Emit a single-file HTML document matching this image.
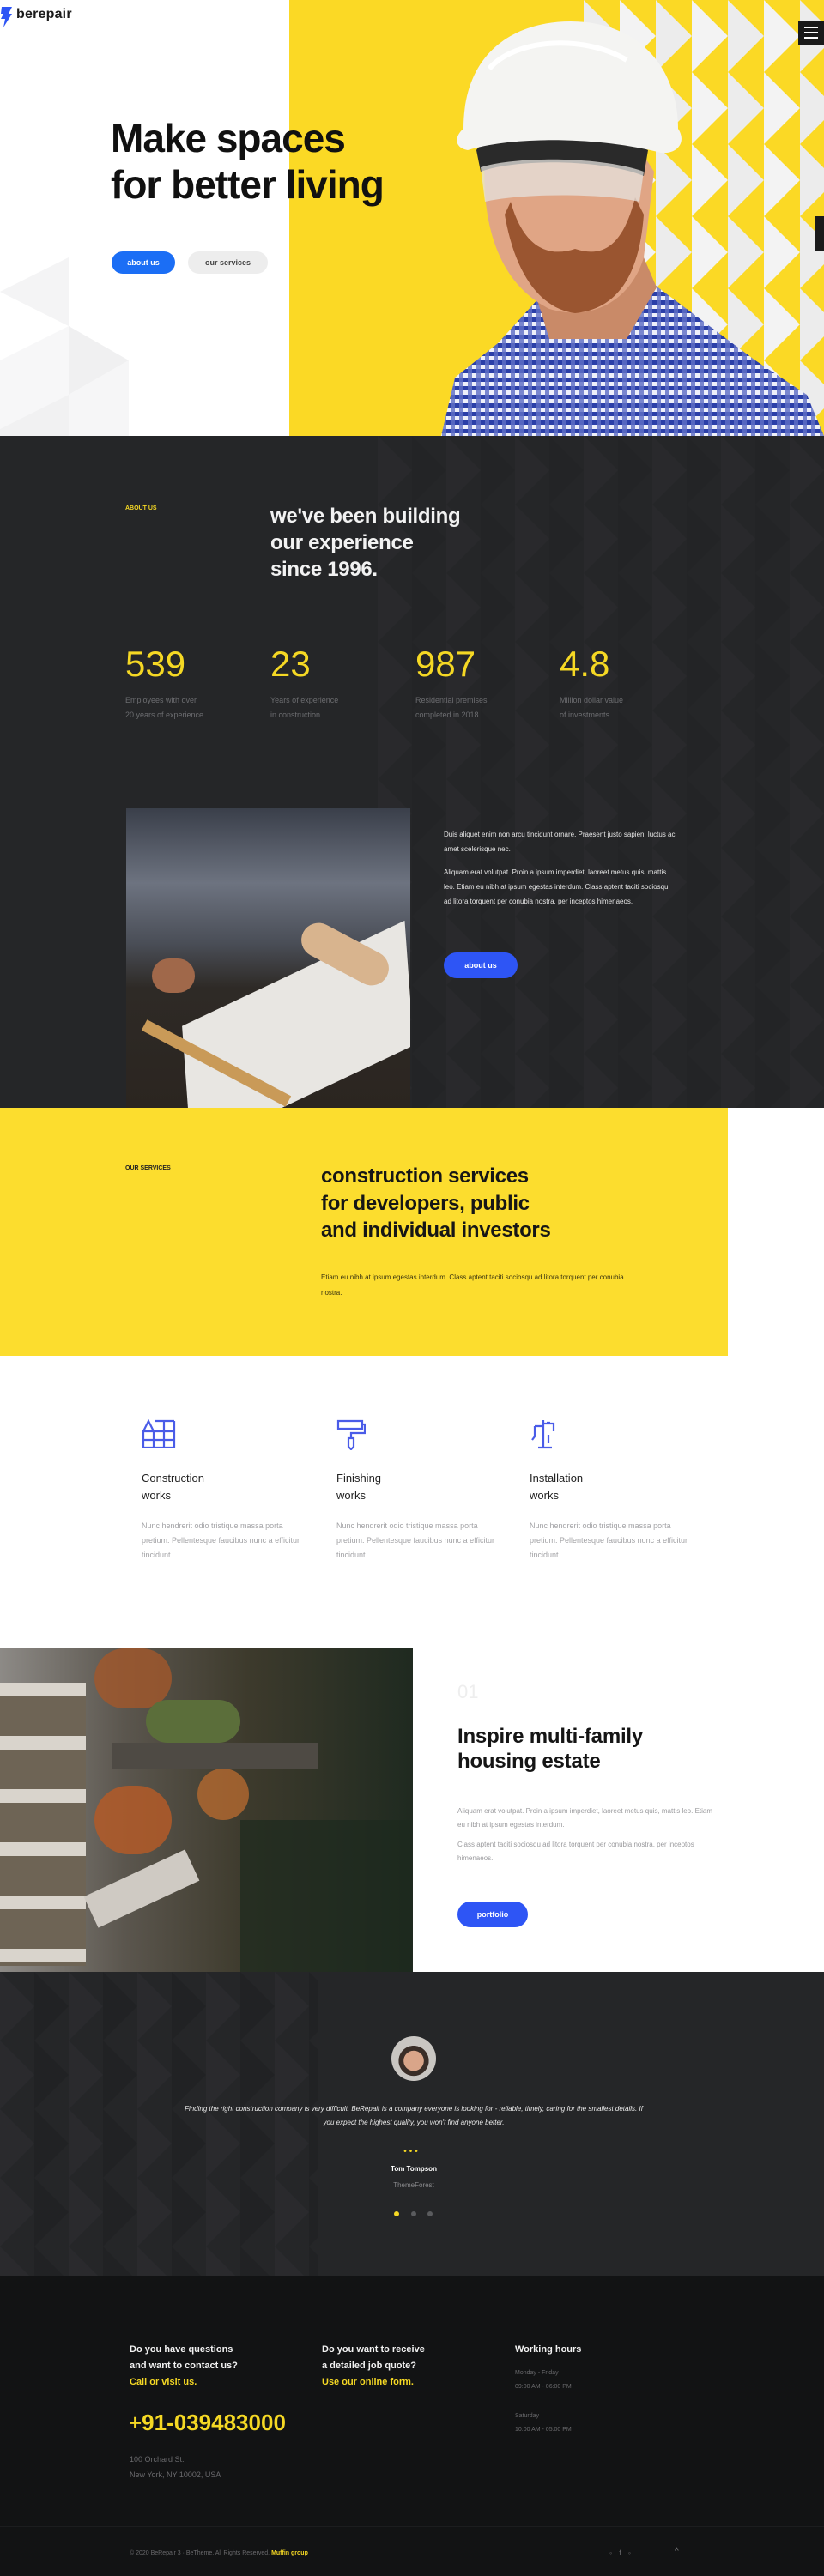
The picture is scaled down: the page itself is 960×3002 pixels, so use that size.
<!DOCTYPE html>
<html><head><meta charset="utf-8"><style>
*{margin:0;padding:0;box-sizing:border-box}
body{width:960px;height:3002px;position:relative;font-family:"Liberation Sans",sans-serif;background:#fff;overflow:hidden}
.a{position:absolute}
.btn{position:absolute;border-radius:16px;font-size:9px;font-weight:bold;color:#fff;background:#2e55f5;text-align:center}
.g{color:#8a8b8e;font-size:9px;line-height:17px}
</style></head><body>

<!-- HERO -->
<div class="a" style="left:0;top:0;width:960px;height:508px;background:#fff;overflow:hidden">
  <svg class="a" style="left:0;top:0" width="340" height="508">
    <polygon points="0,340 80,300 80,380" fill="#f4f4f5"/>
    <polygon points="0,420 80,380 80,460 0,500" fill="#f7f7f8"/>
    <polygon points="80,380 150,420 80,460" fill="#f0f0f1"/>
    <polygon points="80,460 150,420 150,508 80,508" fill="#f6f6f7"/>
    <polygon points="0,500 80,460 80,508 0,508" fill="#f1f1f2"/>
  </svg>
  <div class="a" style="left:337px;top:0;width:623px;height:508px;background:#fbd925"></div>
  <svg class="a" style="left:680px;top:0" width="280" height="508">
    <defs><pattern id="tri" width="84" height="84" patternUnits="userSpaceOnUse">
      <rect width="84" height="84" fill="#fbd925"/>
      <polygon points="0,0 42,42 0,84" fill="#ececec"/>
      <polygon points="42,0 84,42 42,84" fill="#f3f3f3"/>
    </pattern></defs>
    <rect width="280" height="508" fill="url(#tri)"/>
  </svg>
  <!-- man -->
  <svg class="a" style="left:500px;top:0" width="460" height="508">
    <defs><pattern id="chk" width="10" height="10" patternUnits="userSpaceOnUse">
      <rect width="10" height="10" fill="#eef0fa"/><rect width="5" height="5" fill="#2b3fa8"/><rect x="5" y="5" width="5" height="5" fill="#7a87cf"/><rect x="5" width="5" height="5" fill="#5566c0"/>
    </pattern></defs>
    <path d="M14,508 L30,440 L80,400 L130,345 L260,330 L300,360 L380,420 L440,460 L460,508 Z" fill="url(#chk)"/>
    <path d="M120,330 L140,395 L230,395 L265,335 L250,300 L130,300 Z" fill="#c98a68"/>
    <path d="M65,180 C60,260 80,330 140,360 C190,375 235,350 250,300 L262,200 L230,150 L90,150 Z" fill="#e0a585"/>
    <path d="M88,250 C100,320 130,360 170,365 C220,360 245,320 250,250 L240,230 C225,290 200,300 170,290 C140,300 110,290 95,235 Z" fill="#9a5530"/>
    <path d="M55,175 C70,150 200,145 255,175 L250,205 C200,185 100,185 60,200 Z" fill="#2a2a2a"/>
    <path d="M60,195 C100,182 200,182 250,200 L245,235 C200,225 110,225 65,235 Z" fill="#e6e3df" opacity=".75"/>
    <path d="M40,150 C40,60 100,25 165,25 C245,25 290,80 290,150 C300,165 290,180 270,178 C200,160 100,158 45,175 C28,172 30,158 40,150 Z" fill="#f4f4f2"/>
    <path d="M70,80 C100,45 180,40 230,70" stroke="#fff" stroke-width="6" fill="none"/>
  </svg>
  <!-- logo -->
  <svg class="a" style="left:0;top:8px" width="16" height="24" viewBox="0 0 16 24"><path d="M2,0 H14 L10,8 H14 L4,24 L6,14 H1 L4,8 H1 Z" fill="#2e55f5"/></svg>
  <div class="a" style="left:19px;top:8px;font-size:16px;font-weight:bold;color:#1b1b1b;letter-spacing:.2px">berepair</div>
  <div class="a" style="left:930px;top:25px;width:30px;height:28px;background:#1a1a1a"></div>
  <div class="a" style="left:937px;top:31px;width:16px;height:2px;background:#fff;box-shadow:0 6px 0 #fff,0 12px 0 #fff"></div>
  <div class="a" style="left:950px;top:252px;width:10px;height:40px;background:#1a1a1a"></div>
  <div class="a" style="left:129px;top:134px;font-size:46px;line-height:54px;color:#111;font-weight:bold;letter-spacing:-1px">Make spaces<br>for better living</div>
  <div class="btn" style="left:130px;top:293px;width:74px;height:26px;line-height:26px;background:#1b6ef5">about us</div>
  <div class="btn" style="left:219px;top:293px;width:93px;height:26px;line-height:26px;background:#ededed;color:#444">our services</div>
</div>

<!-- ABOUT DARK -->
<div class="a" style="left:0;top:508px;width:960px;height:783px;background:#252628;overflow:hidden">
  <svg class="a" style="left:440px;top:0" width="520" height="783">
    <defs><pattern id="dk" width="80" height="80" patternUnits="userSpaceOnUse">
      <polygon points="0,0 40,40 0,80" fill="#29292c"/><polygon points="40,0 80,40 40,80" fill="#232426"/>
    </pattern></defs>
    <rect width="520" height="783" fill="url(#dk)"/>
  </svg>
  <div class="a" style="left:146px;top:81px;font-size:7px;font-weight:bold;color:#f5d824">ABOUT US</div>
  <div class="a" style="left:315px;top:78px;font-size:24px;line-height:31px;font-weight:bold;color:#f2f2f2;letter-spacing:-.3px">we've been building<br>our experience<br>since 1996.</div>
  <div class="a" style="left:146px;top:242px;font-size:42px;color:#f5d824;font-weight:500">539</div>
  <div class="a" style="left:315px;top:242px;font-size:42px;color:#f5d824;font-weight:500">23</div>
  <div class="a" style="left:484px;top:242px;font-size:42px;color:#f5d824;font-weight:500">987</div>
  <div class="a" style="left:652px;top:242px;font-size:42px;color:#f5d824;font-weight:500">4.8</div>
  <div class="a g" style="left:146px;top:300px;color:#6c6d70">Employees with over<br>20 years of experience</div>
  <div class="a g" style="left:315px;top:300px;color:#6c6d70">Years of experience<br>in construction</div>
  <div class="a g" style="left:484px;top:300px;color:#6c6d70">Residential premises<br>completed in 2018</div>
  <div class="a g" style="left:652px;top:300px;color:#6c6d70">Million dollar value<br>of investments</div>
  <div class="a" style="left:147px;top:434px;width:331px;height:349px;background:linear-gradient(180deg,#3a3f4a 0%,#6d7380 25%,#4a4e57 45%,#2e2a26 60%,#2b2520 100%);overflow:hidden">
    <div class="a" style="left:70px;top:190px;width:260px;height:150px;background:#e8e6e2;transform:skewY(-22deg) rotate(-4deg)"></div>
    <div class="a" style="left:200px;top:150px;width:110px;height:40px;background:#d8b48e;border-radius:20px;transform:rotate(28deg)"></div>
    <div class="a" style="left:10px;top:290px;width:190px;height:14px;background:#c99a58;transform:rotate(28deg)"></div>
    <div class="a" style="left:30px;top:175px;width:50px;height:40px;background:#a0684a;border-radius:20px"></div>
  </div>
  <div class="a" style="left:517px;top:456px;width:270px;font-size:8px;line-height:17px;color:#e6e6e6">Duis aliquet enim non arcu tincidunt ornare. Praesent justo sapien, luctus ac amet scelerisque nec.</div>
  <div class="a" style="left:517px;top:500px;width:270px;font-size:8px;line-height:17px;color:#e6e6e6">Aliquam erat volutpat. Proin a ipsum imperdiet, laoreet metus quis, mattis leo. Etiam eu nibh at ipsum egestas interdum. Class aptent taciti sociosqu ad litora torquent per conubia nostra, per inceptos himenaeos.</div>
  <div class="btn" style="left:517px;top:602px;width:86px;height:30px;line-height:30px">about us</div>
</div>

<!-- SERVICES YELLOW -->
<div class="a" style="left:0;top:1291px;width:848px;height:289px;background:#fcdd2e">
  <div class="a" style="left:146px;top:67px;font-size:7px;font-weight:bold;color:#222">OUR SERVICES</div>
  <div class="a" style="left:374px;top:64px;font-size:24px;line-height:31.5px;font-weight:bold;color:#161616;letter-spacing:-.3px">construction services<br>for developers, public<br>and individual investors</div>
  <div class="a" style="left:374px;top:189px;width:360px;font-size:8px;line-height:18px;color:#3a3410">Etiam eu nibh at ipsum egestas interdum. Class aptent taciti sociosqu ad litora torquent per conubia nostra.</div>
</div>

<!-- SERVICE ITEMS -->
<svg class="a" style="left:165px;top:1654px" width="40" height="34" viewBox="0 0 40 34" fill="none" stroke="#4a5ce8" stroke-width="2.2"><path d="M2,14 L8,2 L14,14 M16,2 H38 M2,14 H38 V33 H2 Z M2,24 H38 M14,14 V33 M26,2 V33 M38,2 V14"/></svg>
<svg class="a" style="left:392px;top:1654px" width="34" height="36" viewBox="0 0 34 36" fill="none" stroke="#4a5ce8" stroke-width="2.2"><path d="M2,2 H30 V11 H2 Z M30,6 H33 V16 H17 V22 M14,22 H20 V32 L17,35 L14,32 Z"/></svg>
<svg class="a" style="left:617px;top:1654px" width="32" height="35" viewBox="0 0 32 35" fill="none" stroke="#4a5ce8" stroke-width="2.2"><path d="M16,1 V33 M10,33 H26 M16,5 H28 V14 M6,8 L16,8 M6,8 V20 L3,24 M22,18 V28 M20,4 H24"/></svg>
<div class="a" style="left:165px;top:1713px;font-size:13px;line-height:20px;color:#222;font-weight:500">Construction<br>works</div>
<div class="a" style="left:392px;top:1713px;font-size:13px;line-height:20px;color:#222;font-weight:500">Finishing<br>works</div>
<div class="a" style="left:617px;top:1713px;font-size:13px;line-height:20px;color:#222;font-weight:500">Installation<br>works</div>
<div class="a g" style="left:165px;top:1770px;width:185px;color:#a3a3a6">Nunc hendrerit odio tristique massa porta pretium. Pellentesque faucibus nunc a efficitur tincidunt.</div>
<div class="a g" style="left:392px;top:1770px;width:185px;color:#a3a3a6">Nunc hendrerit odio tristique massa porta pretium. Pellentesque faucibus nunc a efficitur tincidunt.</div>
<div class="a g" style="left:617px;top:1770px;width:185px;color:#a3a3a6">Nunc hendrerit odio tristique massa porta pretium. Pellentesque faucibus nunc a efficitur tincidunt.</div>

<!-- HOUSING -->
<div class="a" style="left:0;top:1921px;width:481px;height:377px;background:linear-gradient(90deg,#8d8a86 0%,#5b564e 30%,#3d3a2c 60%,#1f2a20 100%);overflow:hidden">
  <div class="a" style="left:0;top:40px;width:100px;height:330px;background:repeating-linear-gradient(180deg,#d9d4cc 0 16px,#6e6455 16px 62px)"></div>
  <div class="a" style="left:110px;top:0;width:90px;height:70px;background:#a3582a;border-radius:40px;opacity:.8"></div>
  <div class="a" style="left:110px;top:160px;width:90px;height:80px;background:#b35a28;border-radius:40px;opacity:.85"></div>
  <div class="a" style="left:230px;top:140px;width:60px;height:60px;background:#b4692f;border-radius:30px;opacity:.8"></div>
  <div class="a" style="left:130px;top:110px;width:240px;height:30px;background:#4e4a44"></div>
  <div class="a" style="left:100px;top:260px;width:130px;height:40px;background:#cfcac3;transform:rotate(-25deg)"></div>
  <div class="a" style="left:280px;top:200px;width:200px;height:177px;background:#1d2a1e;opacity:.7"></div>
  <div class="a" style="left:170px;top:60px;width:110px;height:50px;background:#5b6e3a;border-radius:30px"></div>
</div>
<div class="a" style="left:533px;top:1959px;font-size:22px;color:#eeeeee">01</div>
<div class="a" style="left:533px;top:2009px;font-size:24px;line-height:29px;font-weight:bold;color:#151515;letter-spacing:-.2px">Inspire multi-family<br>housing estate</div>
<div class="a g" style="left:533px;top:2103px;width:300px;font-size:8px;line-height:16px;color:#9a9a9d">Aliquam erat volutpat. Proin a ipsum imperdiet, laoreet metus quis, mattis leo. Etiam eu nibh at ipsum egestas interdum.</div>
<div class="a g" style="left:533px;top:2142px;width:300px;font-size:8px;line-height:16px;color:#9a9a9d">Class aptent taciti sociosqu ad litora torquent per conubia nostra, per inceptos himenaeos.</div>
<div class="btn" style="left:533px;top:2216px;width:82px;height:30px;line-height:30px">portfolio</div>

<!-- TESTIMONIAL -->
<div class="a" style="left:0;top:2298px;width:960px;height:354px;background:#252628;overflow:hidden">
  <svg class="a" style="left:0;top:0" width="370" height="354">
    <defs><pattern id="dk2" width="80" height="80" patternUnits="userSpaceOnUse">
      <polygon points="0,0 40,40 0,80" fill="#2a2a2d"/><polygon points="40,0 80,40 40,80" fill="#212224"/>
    </pattern></defs>
    <rect width="370" height="354" fill="url(#dk2)"/>
  </svg>
  <div class="a" style="left:456px;top:75px;width:52px;height:52px;border-radius:50%;background:radial-gradient(circle at 50% 55%,#d9a589 0 30%,#3a2e28 31% 45%,#c9c6c2 46%)"></div>
  <div class="a" style="left:214px;top:152px;width:536px;text-align:center;font-size:8px;line-height:16px;font-style:italic;color:#ececec">Finding the right construction company is very difficult. BeRepair is a company everyone is looking for - reliable, timely, caring for the smallest details. If you expect the highest quality, you won't find anyone better.</div>
  <div class="a" style="left:0;top:204px;width:960px;text-align:center;font-size:10px;color:#f5d824;letter-spacing:3px">•••</div>
  <div class="a" style="left:0;top:225px;width:964px;text-align:center;font-size:8px;font-weight:bold;color:#fff">Tom Tompson</div>
  <div class="a" style="left:0;top:244px;width:964px;text-align:center;font-size:8px;color:#8a8a8d">ThemeForest</div>
  <div class="a" style="left:459px;top:279px;width:6px;height:6px;border-radius:50%;background:#f5d824"></div>
  <div class="a" style="left:479px;top:279px;width:6px;height:6px;border-radius:50%;background:#5a5b5e"></div>
  <div class="a" style="left:498px;top:279px;width:6px;height:6px;border-radius:50%;background:#5a5b5e"></div>
</div>

<!-- FOOTER -->
<div class="a" style="left:0;top:2652px;width:960px;height:350px;background:#121314">
  <div class="a" style="left:151px;top:77px;font-size:11px;line-height:19px;font-weight:bold;color:#f2f2f2">Do you have questions<br>and want to contact us?<br><span style="color:#f5d824">Call or visit us.</span></div>
  <div class="a" style="left:375px;top:77px;font-size:11px;line-height:19px;font-weight:bold;color:#f2f2f2">Do you want to receive<br>a detailed job quote?<br><span style="color:#f5d824">Use our online form.</span></div>
  <div class="a" style="left:600px;top:77px;font-size:11px;line-height:19px;font-weight:bold;color:#f2f2f2">Working hours</div>
  <div class="a" style="left:600px;top:106px;font-size:7px;line-height:16px;color:#6a6a6d">Monday - Friday<br>09:00 AM - 06:00 PM</div>
  <div class="a" style="left:600px;top:156px;font-size:7px;line-height:16px;color:#6a6a6d">Saturday<br>10:00 AM - 05:00 PM</div>
  <div class="a" style="left:150px;top:156px;font-size:26px;font-weight:bold;color:#f5d824">+91-039483000</div>
  <div class="a" style="left:151px;top:205px;font-size:9px;line-height:18px;color:#6a6a6d">100 Orchard St.<br>New York, NY 10002, USA</div>
  <div class="a" style="left:0;top:292px;width:960px;height:1px;background:#1c1d1f"></div>
  <div class="a" style="left:151px;top:320px;font-size:7px;color:#6a6a6d">© 2020 BeRepair 3 · BeTheme. All Rights Reserved. <span style="color:#f5d824;font-weight:bold">Muffin group</span></div>
  <div class="a" style="left:710px;top:318px;font-size:9px;color:#6a6a6d;letter-spacing:8px">◦f◦</div>
  <div class="a" style="left:786px;top:316px;font-size:10px;color:#8a8a8d">^</div>
</div>
</body></html>
